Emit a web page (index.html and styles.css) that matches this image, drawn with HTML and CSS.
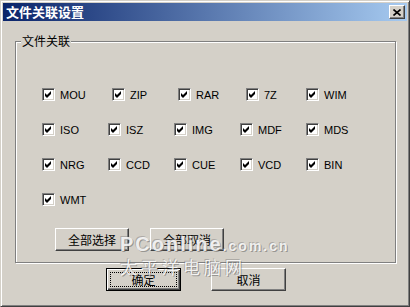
FILE: index.html
```html
<!DOCTYPE html>
<html lang="zh-CN">
  <head>
    <meta charset="UTF-8" />
    <title>文件关联设置</title>
    <link rel="stylesheet" href="styles.css">
  </head>
  <body>
    <div class="window">
      <div class="titlebar">
        <span class="title">文件关联设置</span>
        <span class="close-btn">
          <svg width="8" height="7" viewBox="0 0 8 7">
            <path d="M0.5 0.5 L7.5 6.5 M7.5 0.5 L0.5 6.5" stroke="#000" stroke-width="1.6" fill="none" />
          </svg>
        </span>
      </div>

      <div class="body">
        <fieldset class="group">
          <legend>文件关联</legend>
          <div class="checks">
            <label class="check"><span class="box"><svg width="7" height="7" viewBox="0 0 7 7"><path d="M0 2 L2 4 L6 0 L6 3 L2 7 L0 5 Z" /></svg></span>MOU</label>
            <label class="check nudge4"><span class="box"><svg width="7" height="7" viewBox="0 0 7 7"><path d="M0 2 L2 4 L6 0 L6 3 L2 7 L0 5 Z" /></svg></span>ZIP</label>
            <label class="check nudge4"><span class="box"><svg width="7" height="7" viewBox="0 0 7 7"><path d="M0 2 L2 4 L6 0 L6 3 L2 7 L0 5 Z" /></svg></span>RAR</label>
            <label class="check nudge6"><span class="box"><svg width="7" height="7" viewBox="0 0 7 7"><path d="M0 2 L2 4 L6 0 L6 3 L2 7 L0 5 Z" /></svg></span>7Z</label>
            <label class="check"><span class="box"><svg width="7" height="7" viewBox="0 0 7 7"><path d="M0 2 L2 4 L6 0 L6 3 L2 7 L0 5 Z" /></svg></span>WIM</label>

            <label class="check"><span class="box"><svg width="7" height="7" viewBox="0 0 7 7"><path d="M0 2 L2 4 L6 0 L6 3 L2 7 L0 5 Z" /></svg></span>ISO</label>
            <label class="check"><span class="box"><svg width="7" height="7" viewBox="0 0 7 7"><path d="M0 2 L2 4 L6 0 L6 3 L2 7 L0 5 Z" /></svg></span>ISZ</label>
            <label class="check"><span class="box"><svg width="7" height="7" viewBox="0 0 7 7"><path d="M0 2 L2 4 L6 0 L6 3 L2 7 L0 5 Z" /></svg></span>IMG</label>
            <label class="check"><span class="box"><svg width="7" height="7" viewBox="0 0 7 7"><path d="M0 2 L2 4 L6 0 L6 3 L2 7 L0 5 Z" /></svg></span>MDF</label>
            <label class="check"><span class="box"><svg width="7" height="7" viewBox="0 0 7 7"><path d="M0 2 L2 4 L6 0 L6 3 L2 7 L0 5 Z" /></svg></span>MDS</label>

            <label class="check"><span class="box"><svg width="7" height="7" viewBox="0 0 7 7"><path d="M0 2 L2 4 L6 0 L6 3 L2 7 L0 5 Z" /></svg></span>NRG</label>
            <label class="check"><span class="box"><svg width="7" height="7" viewBox="0 0 7 7"><path d="M0 2 L2 4 L6 0 L6 3 L2 7 L0 5 Z" /></svg></span>CCD</label>
            <label class="check"><span class="box"><svg width="7" height="7" viewBox="0 0 7 7"><path d="M0 2 L2 4 L6 0 L6 3 L2 7 L0 5 Z" /></svg></span>CUE</label>
            <label class="check"><span class="box"><svg width="7" height="7" viewBox="0 0 7 7"><path d="M0 2 L2 4 L6 0 L6 3 L2 7 L0 5 Z" /></svg></span>VCD</label>
            <label class="check"><span class="box"><svg width="7" height="7" viewBox="0 0 7 7"><path d="M0 2 L2 4 L6 0 L6 3 L2 7 L0 5 Z" /></svg></span>BIN</label>

            <label class="check"><span class="box"><svg width="7" height="7" viewBox="0 0 7 7"><path d="M0 2 L2 4 L6 0 L6 3 L2 7 L0 5 Z" /></svg></span>WMT</label>
          </div>

          <div class="group-buttons">
            <span class="btn">全部选择</span>
            <span class="btn">全部取消</span>
          </div>
        </fieldset>

        <div class="dialog-buttons">
          <span class="btn wide default">确定<span class="focus"></span></span>
          <span class="btn wide">取消</span>
        </div>
      </div>

      <!-- site watermark over the screenshot -->
      <div class="watermark">
        <div class="wm-brand">PConline<span class="wm-dot">.com.cn</span></div>
        <div class="wm-cn">太平洋电脑网</div>
      </div>
    </div>
  </body>
</html>
```

FILE: styles.css
```css
/* classic windows dialog */
body {
  margin: 0;
  font-family: "Noto Sans CJK SC", sans-serif;
  background-color: #d4d0c8;
}
.window {
  position: relative;
  width: 410px;
  height: 307px;
  box-sizing: border-box;
  overflow: hidden;
  background-color: #d4d0c8;
  border: 1px solid;
  border-color: #d4d0c8 #404040 #404040 #d4d0c8;
  box-shadow: inset 1px 1px #fff, inset -1px -1px #808080;
  padding: 2px;
}
.titlebar {
  height: 18px;
  display: flex;
  align-items: center;
  justify-content: space-between;
  padding: 0 2px 0 3px;
  background: linear-gradient(to right, #0a246a, #a6caf0);
}
.title {
  color: #fff;
  font-weight: bold;
  font-size: 13px;
  line-height: 18px;
}
.close-btn {
  width: 16px;
  height: 14px;
  box-sizing: border-box;
  display: flex;
  align-items: center;
  justify-content: center;
  background-color: #d4d0c8;
  border: 1px solid;
  border-color: #fff #404040 #404040 #fff;
  box-shadow: inset -1px -1px #808080;
}
.body {
  padding: 13px 0 0 12px;
}
.group {
  margin: 0;
  width: 381px;
  box-sizing: border-box;
  padding: 0 0 11px 0;
  border: 1px solid #808080;
  box-shadow: inset 1px 1px #fff, 1px 1px #fff;
}
.group legend {
  margin-left: 5px;
  padding: 0 1px;
  font-size: 12px;
  line-height: 14px;
  background-color: #d4d0c8;
}
.checks {
  display: grid;
  grid-template-columns: repeat(5, 66px);
  row-gap: 22px;
  margin: 40px 0 0 26px;
}
.check {
  display: flex;
  align-items: center;
  gap: 5px;
  height: 13px;
  font-family: "Liberation Sans", Arial, sans-serif;
  font-size: 11px;
  color: #000;
}
.nudge4 {
  margin-left: 4px;
}
.nudge6 {
  margin-left: 6px;
}
.box {
  width: 13px;
  height: 13px;
  flex: none;
  box-sizing: border-box;
  display: flex;
  align-items: center;
  justify-content: center;
  background-color: #fff;
  border: 1px solid;
  border-color: #808080 #fff #fff #808080;
  box-shadow: inset 1px 1px #404040, inset -1px -1px #d4d0c8;
}
.box svg {
  fill: #000;
}
.group-buttons {
  display: flex;
  gap: 21px;
  margin: 22px 0 0 39px;
}
.btn {
  position: relative;
  width: 74px;
  height: 23px;
  box-sizing: border-box;
  display: flex;
  align-items: center;
  justify-content: center;
  font-size: 12px;
  color: #000;
  background-color: #d4d0c8;
  border: 1px solid;
  border-color: #fff #404040 #404040 #fff;
  box-shadow: inset -1px -1px #808080;
}
.btn.wide {
  width: 75px;
}
.btn.default {
  border-color: #000;
  box-shadow: inset 1px 1px #fff, inset -1px -1px #404040, inset -2px -2px #808080;
}
.focus {
  position: absolute;
  top: 3px;
  left: 3px;
  right: 3px;
  bottom: 3px;
  border: 1px dotted #000;
}
.dialog-buttons {
  display: flex;
  gap: 30px;
  margin: 5px 0 0 91px;
}
.watermark {
  position: absolute;
  left: 119px;
  top: 232px;
  color: rgba(255, 255, 255, 0.85);
  text-shadow: 1px 1px 0 rgba(100, 100, 100, 0.55), -1px -1px 0 rgba(100, 100, 100, 0.35);
  pointer-events: none;
}
.wm-brand {
  font-family: "Liberation Sans", Arial, sans-serif;
  font-weight: bold;
  font-size: 20px;
  line-height: 22px;
  letter-spacing: 2px;
}
.wm-dot {
  font-size: 14px;
  letter-spacing: 2px;
}
.wm-cn {
  font-size: 17px;
  line-height: 20px;
  letter-spacing: 4px;
}
```
